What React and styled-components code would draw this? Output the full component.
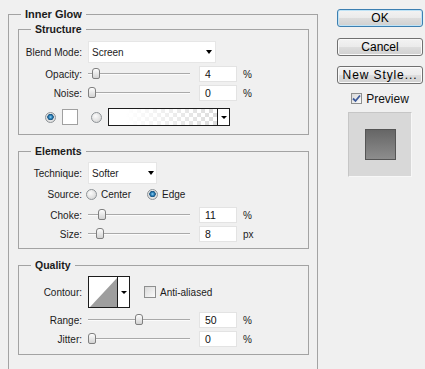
import React from 'react';
import styled, { createGlobalStyle } from 'styled-components';

const Global = createGlobalStyle`
  html, body { margin: 0; padding: 0; background: #f0f0f0; overflow: hidden; }
  body { font-family: "Liberation Sans", Arial, sans-serif; color: #1b1b1b; }
`;

const Dialog = styled.div`
  display: flex;
  align-items: flex-start;
  width: 425px;
  height: 369px;
  padding-left: 8px;
  box-sizing: border-box;
  overflow: hidden;
`;

const Group = styled.fieldset`
  box-sizing: border-box;
  margin: ${p => p.$mt || 0}px 0 0;
  padding: ${p => p.$pad};
  border: 1px solid #a3a3a3;
  min-width: 0;
  ${p => (p.$w ? `width: ${p.$w}px; flex: none;` : '')}
`;

const Legend = styled.legend`
  margin-left: ${p => p.$ml}px;
  padding: 0 4px;
  font-weight: bold;
  font-size: ${p => p.$size}px;
  line-height: 12px;
  color: #1b1b1b;
`;

const Row = styled.div`
  display: flex;
  align-items: center;
  height: ${p => p.$h || 16}px;
  margin-top: ${p => p.$mt || 0}px;
`;

const Label = styled.span`
  flex: none;
  width: 57px;
  margin-right: ${p => p.$gap ?? 6}px;
  text-align: right;
  font-size: 10px;
  white-space: nowrap;
`;

const Text = styled.span`
  margin-left: ${p => p.$ml || 0}px;
  font-size: ${p => p.$size || 10}px;
  white-space: nowrap;
`;

const Select = styled.div`
  flex: none;
  display: flex;
  align-items: center;
  justify-content: space-between;
  width: ${p => p.$w}px;
  height: 22px;
  box-sizing: border-box;
  padding: 0 ${p => p.$pr}px 0 3px;
  background: #fff;
  border: 1px solid #e6e6e6;
  font-size: 10px;
`;

const Caret = styled.span`
  width: 0;
  height: 0;
  border-left: ${p => p.$s || 3.5}px solid transparent;
  border-right: ${p => p.$s || 3.5}px solid transparent;
  border-top: ${p => (p.$s ? p.$s : 4)}px solid #000;
`;

const Slider = styled.div`
  position: relative;
  flex: none;
  width: 105px;
  height: 16px;
  background:
    linear-gradient(#a9a9a9, #a9a9a9) 0 7px / 102px 1px no-repeat,
    linear-gradient(#fbfbfb, #fbfbfb) 0 8px / 102px 1px no-repeat;
`;

const Thumb = styled.span`
  position: absolute;
  top: 2px;
  width: 8px;
  height: 11px;
  box-sizing: border-box;
  border: 1px solid #7f7f7f;
  border-radius: 3px 3px 2px 2px;
  background: linear-gradient(#fdfdfd, #d3d3d3);
`;

const NumField = styled.div`
  flex: none;
  width: 38px;
  height: 16px;
  box-sizing: border-box;
  margin-left: 6px;
  padding-left: 5px;
  background: #fff;
  border: 1px solid #e3e3e3;
  font-size: 10.5px;
  line-height: 14px;
  color: #111;
`;

const Unit = styled.span`
  margin-left: 6px;
  font-size: 10px;
`;

const Radio = styled.span`
  flex: none;
  width: 11px;
  height: 11px;
  box-sizing: border-box;
  margin-left: ${p => p.$ml || 0}px;
  border-radius: 50%;
  border: 1px solid #8e9397;
  background: ${p =>
    p.$on
      ? 'radial-gradient(circle at 50% 45%, #9ad6f4 0, #3289c2 22%, #174f7a 44%, #e6e6e6 52%, #cfcfcf 100%)'
      : 'radial-gradient(circle at 40% 35%, #fbfbfb, #cfcfcf)'};
`;

const Swatch = styled.span`
  flex: none;
  width: 16px;
  height: 16px;
  box-sizing: border-box;
  margin-left: 6px;
  background: #fff;
  border: 1px solid #a0a0a0;
`;

const GradientPicker = styled.div`
  flex: none;
  display: flex;
  width: 122px;
  height: 18px;
  box-sizing: border-box;
  margin-left: 6px;
  border: 1px solid #1c1c1c;
`;

const GradientFill = styled.div`
  flex: 1;
  background:
    linear-gradient(to right, #fff 0%, #fff 15%, rgba(255, 255, 255, 0) 100%),
    conic-gradient(#dcdcdc 25%, #fff 0 50%, #dcdcdc 0 75%, #fff 0) 0 0 / 8px 8px;
`;

const DropCell = styled.div`
  flex: none;
  width: ${p => p.$w}px;
  display: flex;
  align-items: center;
  justify-content: center;
  background: #fff;
  border-left: 1px solid #1c1c1c;
`;

const ContourBox = styled.div`
  flex: none;
  display: flex;
  width: 42px;
  height: 32px;
  box-sizing: border-box;
  border: 1px solid #1c1c1c;
  background: #fff;
`;

const ContourArea = styled.div`
  flex: 1;
  display: flex;
`;

const CheckBox = styled.span`
  flex: none;
  display: flex;
  align-items: center;
  justify-content: center;
  width: ${p => p.$s}px;
  height: ${p => p.$s}px;
  box-sizing: border-box;
  margin-left: ${p => p.$ml || 0}px;
  border: 1px solid #8e8f8f;
  background: linear-gradient(135deg, #d9d9d9, #fbfbfb);
`;

const Side = styled.div`
  flex: none;
  display: flex;
  flex-direction: column;
  align-items: center;
  width: 86px;
  margin-left: 19px;
`;

const Button = styled.button`
  display: block;
  width: 86px;
  height: 18px;
  margin-top: ${p => p.$mt}px;
  padding: 0;
  border: 1px solid ${p => (p.$primary ? '#3c7fb1' : '#707070')};
  border-radius: 3px;
  background: linear-gradient(#f3f3f3 0%, #ebebeb 48%, #dddddd 52%, #d0d0d0 100%);
  box-shadow: inset 0 0 0 1px ${p => (p.$primary ? '#bfe3f6' : '#fafafa')};
  font-family: inherit;
  font-size: 12px;
  line-height: 16px;
  letter-spacing: ${p => p.$spread || 0}px;
  color: #000;
`;

const PreviewRow = styled.div`
  display: flex;
  align-items: center;
  height: 13px;
  margin-top: 8px;
  color: #111;
`;

const PreviewFrame = styled.div`
  display: flex;
  align-items: center;
  justify-content: center;
  width: 64px;
  height: 65px;
  box-sizing: border-box;
  margin-top: 7px;
  background: #d8d8d8;
  border: 1px solid;
  border-color: #c6c6c6 #f7f7f7 #f7f7f7 #c6c6c6;
`;

const PreviewSquare = styled.div`
  width: 31px;
  height: 31px;
  box-sizing: border-box;
  border: 1px solid #555;
  background: linear-gradient(#666, #8d8d8d);
`;

const SliderRow = ({ label, value, unit, mt }) => (
  <Row $mt={mt}>
    <Label>{label}</Label>
    <Slider>
      <Thumb style={{ left: `${Math.round(value * 0.94)}px` }} />
    </Slider>
    <NumField>{value}</NumField>
    <Unit>{unit}</Unit>
  </Row>
);

export default function App() {
  return (
    <Dialog>
      <Global />
      <Group $w={310} $mt={8} $pad="3px 8px 24px 9px">
        <Legend $ml={3} $size={11}>Inner Glow</Legend>

        <Group $pad="6px 8px 8px 6px">
          <Legend $ml={6} $size={10.5}>Structure</Legend>
          <Row $h={22}>
            <Label>Blend Mode:</Label>
            <Select $w={128} $pr={3}>
              Screen
              <Caret />
            </Select>
          </Row>
          <SliderRow label="Opacity:" value={4} unit="%" mt={3} />
          <SliderRow label="Noise:" value={0} unit="%" mt={3} />
          <Row $h={18} $mt={7}>
            <Radio $ml={20} $on />
            <Swatch />
            <Radio $ml={13} />
            <GradientPicker>
              <GradientFill />
              <DropCell $w={11}>
                <Caret $s={3} />
              </DropCell>
            </GradientPicker>
          </Row>
        </Group>

        <Group $mt={10} $pad="5px 8px 6px 6px">
          <Legend $ml={6} $size={10.5}>Elements</Legend>
          <Row $h={22}>
            <Label>Technique:</Label>
            <Select $w={69} $pr={2}>
              Softer
              <Caret />
            </Select>
          </Row>
          <Row $mt={2}>
            <Label $gap={4}>Source:</Label>
            <Radio />
            <Text $ml={4}>Center</Text>
            <Radio $ml={16} $on />
            <Text $ml={4}>Edge</Text>
          </Row>
          <SliderRow label="Choke:" value={11} unit="%" mt={5} />
          <SliderRow label="Size:" value={8} unit="px" mt={3} />
        </Group>

        <Group $mt={10} $pad="5px 8px 7px 6px">
          <Legend $ml={6} $size={10.5}>Quality</Legend>
          <Row $h={32}>
            <Label>Contour:</Label>
            <ContourBox>
              <ContourArea>
                <svg width="28" height="30" viewBox="0 0 28 30">
                  <polygon points="1,30 28,1 28,30" fill="#9e9e9e" />
                </svg>
              </ContourArea>
              <DropCell $w={11}>
                <Caret $s={3} />
              </DropCell>
            </ContourBox>
            <CheckBox $s={12} $ml={14} />
            <Text $ml={4}>Anti-aliased</Text>
          </Row>
          <SliderRow label="Range:" value={50} unit="%" mt={4} />
          <SliderRow label="Jitter:" value={0} unit="%" mt={3} />
        </Group>
      </Group>

      <Side>
        <Button $primary $mt={9}>OK</Button>
        <Button $mt={11}>Cancel</Button>
        <Button $mt={10} $spread={0.9}>New Style...</Button>
        <PreviewRow>
          <CheckBox $s={11}>
            <svg width="9" height="9" viewBox="0 0 9 9">
              <path d="M1 4.5 L3.5 7 L8 1.5" fill="none" stroke="#3d5a9a" strokeWidth="1.8" />
            </svg>
          </CheckBox>
          <Text $ml={4} $size={12}>Preview</Text>
        </PreviewRow>
        <PreviewFrame>
          <PreviewSquare />
        </PreviewFrame>
      </Side>
    </Dialog>
  );
}
